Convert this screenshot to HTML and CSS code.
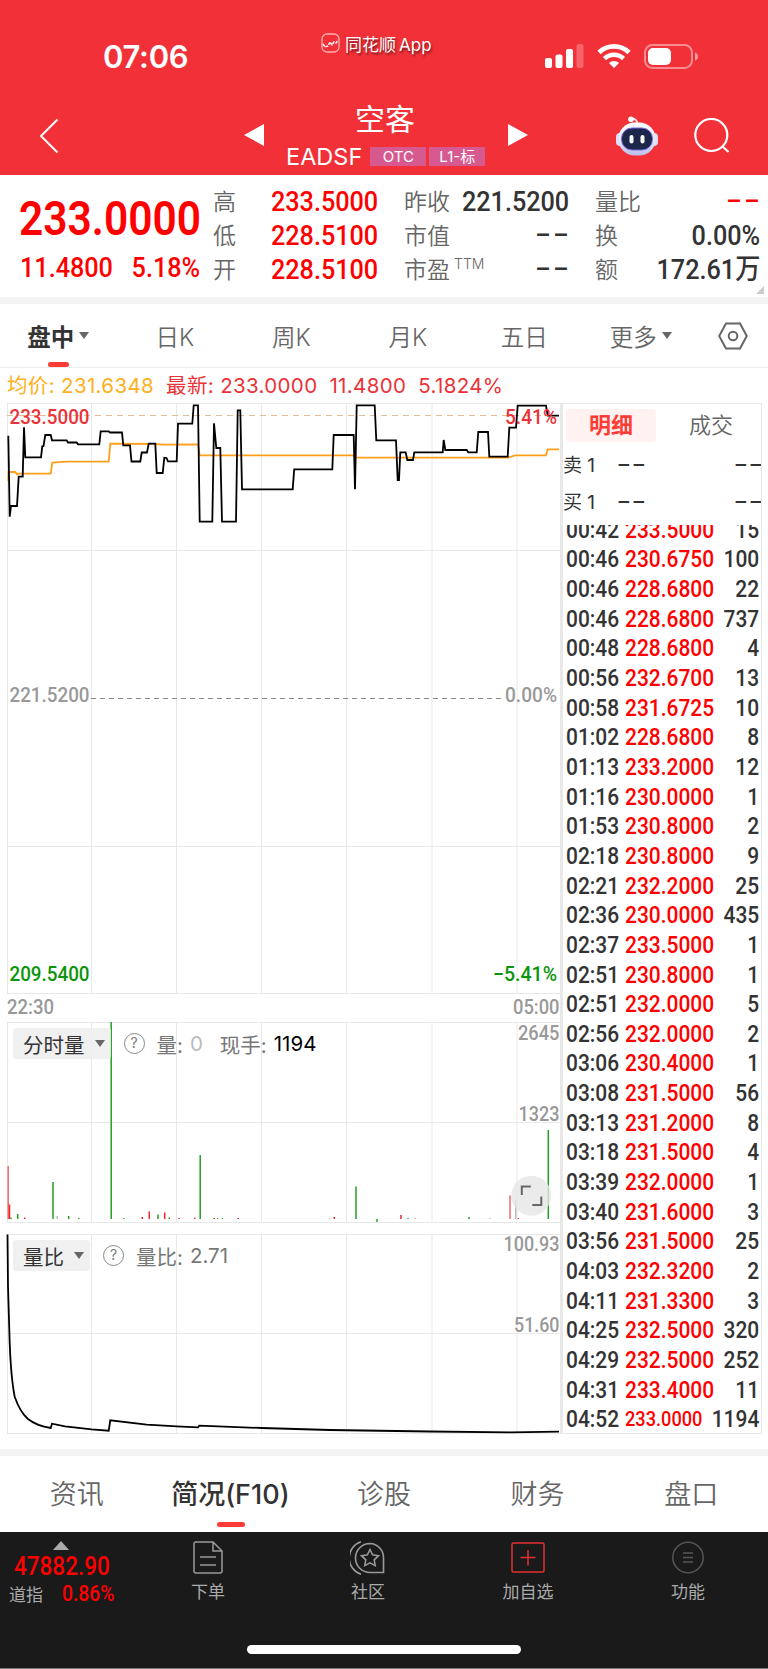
FILE: index.html
```html
<!DOCTYPE html>
<html lang="zh-CN">
<head>
    <meta charset="UTF-8">
    <meta name="viewport" content="width=device-width, initial-scale=1.0">
    <title>空客 EADSF</title>
    <link rel="stylesheet" href="styles.css">
</head>
<body>

    <!-- Header -->
    <header class="header">
        <div class="status-bar">
            <div class="clock">07:06</div>
            <div class="app-mark">
                <svg width="19" height="20" viewBox="0 0 19 20" fill="none" stroke="#fff">
                    <rect x="1" y="1" width="17" height="18" rx="5" stroke="#ffb0b0" stroke-width="1.3"/>
                    <path d="M2 11l2 3 3-1 2-4 2 3 2-3 2 1 2-3" stroke-width="1.5" stroke-dasharray="3 1"/>
                </svg>
                <span>同花顺<b>App</b></span>
            </div>
            <div class="status-icons">
                <svg width="39" height="24" viewBox="0 0 39 24" fill="#fff">
                    <rect x="0" y="14" width="7" height="10" rx="2"/>
                    <rect x="10.5" y="10.5" width="7" height="13.5" rx="2"/>
                    <rect x="21" y="5" width="7" height="19" rx="2"/>
                    <rect x="31.5" y="0" width="7" height="24" rx="2" opacity=".25"/>
                </svg>
                <svg width="34" height="24" viewBox="0 0 34 24" fill="none" stroke="#fff" stroke-width="4.6">
                    <path d="M2 8.5a21.5 21.5 0 0 1 30 0"/>
                    <path d="M7.5 14.6a13.6 13.6 0 0 1 19 0"/>
                    <path d="M17 24l-5-5a7.2 7.2 0 0 1 10 0z" fill="#fff" stroke="none"/>
                </svg>
                <svg width="54" height="25" viewBox="0 0 54 25">
                    <rect x="1" y="1" width="47" height="23" rx="7.5" fill="none" stroke="#fff" stroke-opacity=".45" stroke-width="2"/>
                    <rect x="4" y="4" width="23" height="17" rx="5" fill="#fff"/>
                    <path d="M51 8.500q3 1 3 4t-3 4z" fill="#fff" opacity=".5"/>
                </svg>
            </div>
        </div>
        <div class="nav">
            <svg class="back" width="20" height="36" viewBox="0 0 20 36" fill="none" stroke="#fff" stroke-width="2">
                <path d="M18.500 1.500L2 18l16.500 16.500"/>
            </svg>
            <svg class="prev" width="20" height="22" viewBox="0 0 20 22" fill="#fff"><path d="M20 0v22L0 11z"/></svg>
            <div class="stock">
                <div class="stock-name">空客</div>
                <div class="stock-code">EADSF <span class="badge">OTC</span><span class="badge">L1-标</span></div>
            </div>
            <svg class="next" width="20" height="22" viewBox="0 0 20 22" fill="#fff"><path d="M0 0v22l20-11z"/></svg>
            <svg class="robot" width="42" height="40" viewBox="0 0 42 40">
                <defs>
                    <linearGradient id="shell" x1="0" y1="0" x2="0" y2="1">
                        <stop offset="0" stop-color="#fff"/>
                        <stop offset=".6" stop-color="#e3e5fb"/>
                        <stop offset="1" stop-color="#b9bbe8"/>
                    </linearGradient>
                </defs>
                <path d="M15 3q6-1 6.500 5" fill="none" stroke="#f3d9e6" stroke-width="2"/>
                <circle cx="15" cy="3.300" r="2.800" fill="#fff"/>
                <rect x="0" y="17" width="8" height="13" rx="4" fill="#dcdff8"/>
                <rect x="34" y="17" width="8" height="13" rx="4" fill="#dcdff8"/>
                <rect x="2.500" y="6.500" width="37" height="33" rx="16" fill="url(#shell)"/>
                <rect x="5.500" y="12" width="31" height="22" rx="10.500" fill="#1c2749" stroke="#7668e8" stroke-width="1"/>
                <rect x="13.500" y="19" width="4" height="8.500" rx="2" fill="#fff"/>
                <rect x="24.500" y="19" width="4" height="8.500" rx="2" fill="#fff"/>
            </svg>
            <svg class="search" width="36" height="36" viewBox="0 0 36 36" fill="none" stroke="#fff" stroke-width="2.200">
                <circle cx="17.300" cy="17" r="16"/>
                <path d="M28 28l6.500 6"/>
            </svg>
        </div>
    </header>

    <!-- Quote -->
    <section class="quote">
        <div class="quote-price">
            <div class="price"><span class="num">233.0000</span></div>
            <div class="change"><span class="num">11.4800</span><span class="num right">5.18%</span></div>
        </div>
        <div class="quote-item"><label>高</label><span class="num right red">233.5000</span></div>
        <div class="quote-item"><label>昨收</label><span class="num right">221.5200</span></div>
        <div class="quote-item"><label>量比</label><span class="num right red dash">––</span></div>
        <div class="quote-item"><label>低</label><span class="num right red">228.5100</span></div>
        <div class="quote-item"><label>市值</label><span class="num right dash">––</span></div>
        <div class="quote-item"><label>换</label><span class="num right">0.00%</span></div>
        <div class="quote-item"><label>开</label><span class="num right red">228.5100</span></div>
        <div class="quote-item"><label>市盈<sup>TTM</sup></label><span class="num right dash">––</span></div>
        <div class="quote-item"><label>额</label><span class="num right">172.61万</span></div>
        <i class="corner"></i>
    </section>

    <!-- Period tabs -->
    <nav class="periods">
        <a class="active">盘中<i class="caret"></i></a>
        <a>日K</a>
        <a>周K</a>
        <a>月K</a>
        <a>五日</a>
        <a>更多<i class="caret"></i></a>
        <svg width="30" height="28" viewBox="0 0 30 28" fill="none" stroke="#666" stroke-width="2">
            <path d="M8 1.500h14L28.800 14 22 26.500H8L1.200 14z"/>
            <circle cx="15" cy="14" r="4.300"/>
        </svg>
    </nav>

    <div class="legend">
        <span class="avg">均价: 231.6348</span><span>最新: 233.0000</span><span>11.4800</span><span>5.1824%</span>
    </div>

    <main class="market">
        <div class="charts">
            <!-- Price chart -->
            <svg class="chart" width="562" height="619" viewBox="0 403 562 619">
                <g class="grid">
                    <path d="M7 403.500H560M7 550.500H560M7 846.500H560M7 993.500H560"/>
                    <path d="M7.500 403V994M91.500 403V994M176.500 403V994M261.500 403V994M346.500 403V994M432 403V994M517 403V994"/>
                </g>
                <path d="M7 415.500H558" stroke="#e0bd94" stroke-dasharray="6 5" fill="none"/>
                <path d="M91 698.500H505" stroke="#888" stroke-dasharray="5 4" fill="none"/>
                <polyline class="avg-line" points="8.300,481 8.500,472 15.300,472 17,474.500 18,473.700 50.700,473.700 52.300,462.700 66.700,461.700 108.700,461.700 110.300,443.700 153,444 163,444.700 198,444.300 199.700,455.300 353.700,455.300 355,457.700 508,457.700 515,455.300 546,455.300 547.700,449.300 559,449.300"/>
                <polyline class="price-line" points="8.300,435.700 9.700,516.700 11,506 17,506 18.700,476.700 22.700,476.700 24,427.300 25.300,457.300 41,457.300 42.300,446.300 43.500,446 45.300,435 50.700,435 52,440.300 66.700,440.300 68,442.500 76.700,442.500 78,444.300 99.300,444.300 100.700,431.300 108.700,431.300 110,432.500 122,432.500 123.300,445.300 130,445.300 131.500,461.500 140.300,461.500 141.700,452.500 147,452.500 148.700,443.700 155.300,443.700 156.700,473 162.700,473 164.300,457.700 166.500,458 168,461.300 176.700,461.300 178,423.700 192.300,423.700 193.700,405.300 198,405.300 199.700,521.700 212.300,521.700 214,423.300 216.300,448 220.300,448 222,521.700 236,521.700 237.700,410.300 240.300,410.300 242,489.300 292.700,489.300 294.200,469.300 332.300,469.300 333.700,435 353.700,435 355,489.300 356.700,405.300 374.700,405.300 376.300,440.300 396,440.300 397.700,480 399,480 400.300,452.300 405.700,452.300 407.300,460 413,460 414.300,452.300 442.700,452.300 443.700,440 445.300,450 466.700,450 468.300,452.300 476.700,452.300 478.300,432 488,432 489.300,456.700 507.700,456.700 509.300,427.700 516,427.700 517.700,405.700 546,405.700 547.700,415.700 559,415.700"/>
                <g class="axis">
                    <text x="9.500" y="423.500" textLength="80" lengthAdjust="spacingAndGlyphs" fill="#ea3338">233.5000</text>
                    <text x="505" y="423.500" textLength="52" lengthAdjust="spacingAndGlyphs" fill="#ea3338">5.41%</text>
                    <text x="9.500" y="702" textLength="80" lengthAdjust="spacingAndGlyphs" fill="#999">221.5200</text>
                    <text x="505" y="702" textLength="52" lengthAdjust="spacingAndGlyphs" fill="#999">0.00%</text>
                    <text x="9.500" y="981" textLength="80" lengthAdjust="spacingAndGlyphs" fill="#0a960a">209.5400</text>
                    <text x="493" y="981" textLength="64" lengthAdjust="spacingAndGlyphs" fill="#0a960a">−5.41%</text>
                    <text x="7" y="1014" textLength="47" lengthAdjust="spacingAndGlyphs" fill="#999">22:30</text>
                    <text x="513" y="1014" textLength="46.500" lengthAdjust="spacingAndGlyphs" fill="#999">05:00</text>
                </g>
            </svg>

            <!-- Volume chart -->
            <div class="sub-chart">
                <svg class="chart" width="562" height="212" viewBox="0 1022 562 212">
                    <g class="grid">
                        <path d="M7 1022.500H560M7 1122.500H560M7 1222.500H560"/>
                        <path d="M7.500 1022V1223M91.500 1022V1223M176.500 1022V1223M261.500 1022V1223M346.500 1022V1223M432 1022V1223M517 1022V1223"/>
                    </g>
                    <g fill="none" stroke-width="1.500">
                        <path stroke="#f26b6b" d="M8.200 1219V1166M510 1219V1195.500"/>
                        <path stroke="#e8262c" d="M9.500 1219V1204.500M24.700 1219V1217.500M142.300 1219V1217M149.300 1219V1211.500M164.700 1219V1212.500M179 1219V1218M194.700 1219V1217.800M214.300 1219V1218M238.300 1219V1218M334.300 1219V1217M401 1219V1215M415 1219V1218.500M518.300 1219V1218"/>
                        <path stroke="#22a022" d="M11 1219V1217.500M17.700 1219V1214M53 1219V1182M68.700 1219V1216M78.700 1219V1218M111.200 1219V1022M123.700 1219V1218M158 1219V1214.500M169.300 1219V1217.500M200.200 1219V1155M217.500 1219V1218.300M222.500 1219V1218.300M356 1219V1186.500M377 1222V1219M408 1219V1218M469 1219V1217M548.300 1219V1130"/>
                        <path stroke="#bbb" d="M57.300 1219V1216M330 1219V1218M490 1219V1218M515.700 1219V1200"/>
                    </g>
                    <g class="axis">
                        <text x="518" y="1039.500" textLength="41.500" lengthAdjust="spacingAndGlyphs" fill="#999">2645</text>
                        <text x="518.500" y="1121" textLength="41" lengthAdjust="spacingAndGlyphs" fill="#999">1323</text>
                    </g>
                    <circle cx="531.300" cy="1195.700" r="20" fill="#e6e6e6" opacity=".8"/>
                    <path d="M521.800 1195V1186.500H530.800M541.300 1196.500V1205H532.300" fill="none" stroke="#666" stroke-width="2"/>
                </svg>
                <div class="indicator">
                    <span class="picker">分时量<i class="caret"></i></span>
                    <span class="help">?</span>
                    <span>量:</span><span class="faint">0</span><span class="lots">现手:</span><span class="black">1194</span>
                </div>
            </div>

            <!-- Volume ratio chart -->
            <div class="sub-chart">
                <svg class="chart" width="562" height="200" viewBox="0 1234 562 200">
                    <g class="grid">
                        <path d="M7 1234.500H560M7 1333.500H560M7 1433.500H560"/>
                        <path d="M7.500 1234V1433M91.500 1234V1433M176.500 1234V1433M261.500 1234V1433M346.500 1234V1433M432 1234V1433M517 1234V1433"/>
                    </g>
                    <path class="price-line" d="M7.500 1234.500L8 1286.700 9.700 1343Q11 1378 14.700 1396.700Q20 1412 28 1419Q37 1426 50.700 1428L52 1423.700 65 1426.300 91.700 1429.300 108.700 1430.700 110.300 1420.300 146.700 1424.700 176.700 1426.300 198 1427.300 199.300 1425.700 261.700 1428 330 1430 430 1431.500 510 1432.300 559 1431.700"/>
                    <g class="axis">
                        <text x="503.500" y="1251" textLength="56" lengthAdjust="spacingAndGlyphs" fill="#999">100.93</text>
                        <text x="514" y="1332" textLength="45.500" lengthAdjust="spacingAndGlyphs" fill="#999">51.60</text>
                    </g>
                </svg>
                <div class="indicator">
                    <span class="picker">量比<i class="caret"></i></span>
                    <span class="help">?</span>
                    <span>量比:</span><span>2.71</span>
                </div>
            </div>
        </div>

        <!-- Order book and trades -->
        <aside class="trades">
            <div class="trade-tabs">
                <span class="active">明细</span>
                <span>成交</span>
            </div>
            <div class="book"><span>卖 1</span><span class="dash">––</span><span class="dash">––</span></div>
            <div class="book"><span>买 1</span><span class="dash">––</span><span class="dash">––</span></div>
            <div class="ticks">
                <div class="tick"><span>00:42</span><b>233.5000</b><em>15</em></div>
                <div class="tick"><span>00:46</span><b>230.6750</b><em>100</em></div>
                <div class="tick"><span>00:46</span><b>228.6800</b><em>22</em></div>
                <div class="tick"><span>00:46</span><b>228.6800</b><em>737</em></div>
                <div class="tick"><span>00:48</span><b>228.6800</b><em>4</em></div>
                <div class="tick"><span>00:56</span><b>232.6700</b><em>13</em></div>
                <div class="tick"><span>00:58</span><b>231.6725</b><em>10</em></div>
                <div class="tick"><span>01:02</span><b>228.6800</b><em>8</em></div>
                <div class="tick"><span>01:13</span><b>233.2000</b><em>12</em></div>
                <div class="tick"><span>01:16</span><b>230.0000</b><em>1</em></div>
                <div class="tick"><span>01:53</span><b>230.8000</b><em>2</em></div>
                <div class="tick"><span>02:18</span><b>230.8000</b><em>9</em></div>
                <div class="tick"><span>02:21</span><b>232.2000</b><em>25</em></div>
                <div class="tick"><span>02:36</span><b>230.0000</b><em>435</em></div>
                <div class="tick"><span>02:37</span><b>233.5000</b><em>1</em></div>
                <div class="tick"><span>02:51</span><b>230.8000</b><em>1</em></div>
                <div class="tick"><span>02:51</span><b>232.0000</b><em>5</em></div>
                <div class="tick"><span>02:56</span><b>232.0000</b><em>2</em></div>
                <div class="tick"><span>03:06</span><b>230.4000</b><em>1</em></div>
                <div class="tick"><span>03:08</span><b>231.5000</b><em>56</em></div>
                <div class="tick"><span>03:13</span><b>231.2000</b><em>8</em></div>
                <div class="tick"><span>03:18</span><b>231.5000</b><em>4</em></div>
                <div class="tick"><span>03:39</span><b>232.0000</b><em>1</em></div>
                <div class="tick"><span>03:40</span><b>231.6000</b><em>3</em></div>
                <div class="tick"><span>03:56</span><b>231.5000</b><em>25</em></div>
                <div class="tick"><span>04:03</span><b>232.3200</b><em>2</em></div>
                <div class="tick"><span>04:11</span><b>231.3300</b><em>3</em></div>
                <div class="tick"><span>04:25</span><b>232.5000</b><em>320</em></div>
                <div class="tick"><span>04:29</span><b>232.5000</b><em>252</em></div>
                <div class="tick"><span>04:31</span><b>233.4000</b><em>11</em></div>
                <div class="tick"><span>04:52</span><b class="small">233.0000</b><em>1194</em></div>
            </div>
        </aside>
    </main>

    <nav class="sections">
        <a>资讯</a>
        <a class="active">简况(F10)</a>
        <a>诊股</a>
        <a>财务</a>
        <a>盘口</a>
    </nav>

    <!-- Bottom bar -->
    <footer class="bottom">
        <div class="tools">
            <div class="index">
                <i class="up"></i>
                <div class="index-value"><span class="num">47882.90</span></div>
                <div class="index-row"><span>道指</span><span class="num">0.86%</span></div>
            </div>
            <div class="tool">
                <svg width="34" height="34" viewBox="0 0 34 34" fill="none" stroke="#999" stroke-width="1.500">
                    <path d="M4 1h18l9 9v20q0 2-2 2H5q-2 0-2-2V3q0-2 2-2zM22 1v9h9M9 16h16M9 24h16"/>
                </svg>
                下单
            </div>
            <div class="tool">
                <svg width="36" height="34" viewBox="0 0 36 34" fill="none" stroke="#999" stroke-width="1.600">
                    <path d="M20 2.500a14 14 0 0 0 0 29h13.500V17A14 14 0 0 0 20 2.500z"/>
                    <path d="M11 .8a17 17 0 0 0 0 32.400"/>
                    <path d="M20 8.500l2.600 5.300 5.900.9-4.300 4.100 1 5.800-5.200-2.700-5.200 2.700 1-5.800-4.300-4.100 5.900-.9z"/>
                </svg>
                社区
            </div>
            <div class="tool">
                <svg width="34" height="34" viewBox="0 0 34 34" fill="none" stroke="#e23033" stroke-width="1.500">
                    <rect x="1" y="2" width="32" height="29" rx="1.500"/>
                    <path d="M9.500 16.500h15M17 9v15.500"/>
                </svg>
                加自选
            </div>
            <div class="tool">
                <svg width="34" height="34" viewBox="0 0 34 34" fill="none" stroke="#555" stroke-width="1.500">
                    <circle cx="17" cy="16.500" r="15.200"/>
                    <path d="M12 12h10M12 16.500h10M12 21h10"/>
                </svg>
                功能
            </div>
        </div>
        <div class="home-bar"></div>
    </footer>

</body>
</html>
```

FILE: styles.css
```css
* {
    box-sizing: border-box;
}

body {
    margin: 0;
    width: 768px;
    background: #fff;
    color: #333;
    font-family: Inter, "Noto Sans CJK SC", sans-serif;
}

svg {
    display: block;
    flex: none;
}

i, em {
    font-style: normal;
}

/* narrow digits */
.num {
    display: inline-block;
    font-family: Roboto, "Noto Sans CJK SC", sans-serif;
    font-weight: 500;
    transform: scaleX(.9);
    transform-origin: left center;
}

.num.right {
    transform-origin: right center;
}

.red {
    color: #f00;
}

.caret {
    display: inline-block;
    border: 5.5px solid transparent;
    border-top: 7px solid #666;
    border-bottom: 0;
}

/* header */
.header {
    height: 175px;
    background: #f23038;
    color: #fff;
}

.status-bar {
    display: flex;
    height: 90px;
    padding-left: 103px;
}

.clock {
    width: 218px;
    margin-top: 38px;
    font-size: 31px;
    font-weight: 600;
    letter-spacing: -.3px;
    line-height: 38px;
}

.app-mark {
    display: flex;
    align-items: center;
    gap: 5px;
    width: 224px;
    height: 26px;
    margin-top: 30px;
    font-size: 17px;
    text-shadow: 1px 2px 2px rgba(0, 0, 0, .5);
}

.app-mark b {
    margin-left: 3px;
    font-weight: 400;
}

.status-icons {
    display: flex;
    align-items: flex-start;
    gap: 13px;
    margin-top: 44px;
}

.nav {
    display: flex;
    align-items: center;
    height: 85px;
    padding: 15px 0 8px 39px;
}

.prev {
    margin: -2px 0 0 185px;
}

.stock {
    width: 200px;
    height: 68px;
    margin: 4px 22px 0;
}

.stock-name {
    margin-top: -4px;
    padding-right: 2px;
    font-size: 30px;
    line-height: 38px;
    text-align: center;
}

.stock-code {
    display: flex;
    align-items: center;
    gap: 3px;
    height: 36px;
    font-size: 23.500px;
    white-space: nowrap;
}

.badge {
    width: 56px;
    height: 19px;
    background: #d65a90;
    font-size: 15px;
    line-height: 19px;
    text-align: center;
}

.badge:first-child {
    margin-left: 5px;
}

.next {
    margin-top: -2px;
}

.robot {
    margin-left: 88px;
}

.search {
    margin-left: 36px;
}

/* quote */
.quote {
    position: relative;
    display: grid;
    grid-template-columns: 167px 165px 165px 165px;
    grid-template-rows: 34px 34px 34px;
    column-gap: 26px;
    height: 129px;
    padding: 10px 0 0 20px;
    border-bottom: 7px solid #f4f4f4;
}

.quote-price {
    grid-row: 1 / 4;
    width: 180px;
    color: #f00;
}

.price {
    height: 66px;
    margin-left: -1px;
    font-size: 48px;
    line-height: 66px;
    white-space: nowrap;
}

.price .num {
    font-weight: 600;
    transform: scaleX(.885);
}

.change {
    display: flex;
    justify-content: space-between;
    font-size: 28px;
    line-height: 34px;
}

.quote-item {
    display: flex;
    justify-content: space-between;
    font-size: 28px;
    line-height: 34px;
    white-space: nowrap;
}

.quote-item label {
    flex: none;
    width: 80px;
    margin-right: -40px;
    color: #666;
    font-size: 23px;
    font-weight: 350;
}

.quote-item sup {
    margin-left: 4px;
    font-size: 14px;
    line-height: 0;
}

.dash {
    letter-spacing: 3px;
}

.quote-item .dash {
    margin-right: -2px;
    transform: scaleX(.85);
}

.corner {
    position: absolute;
    right: 4px;
    bottom: 3px;
    border: 4px solid #ccc;
    border-top-color: transparent;
    border-left-color: transparent;
}

/* period tabs */
.periods {
    display: flex;
    align-items: center;
    height: 64px;
    border-bottom: 1px solid #ececec;
    color: #666;
    font-size: 23.500px;
    font-weight: 350;
}

.periods a {
    position: relative;
    display: flex;
    align-items: center;
    justify-content: center;
    gap: 5px;
    width: 116.500px;
    height: 63px;
}

.periods .active {
    color: #333;
    font-weight: 700;
}

.periods svg {
    margin-left: 19px;
}

.periods .active::after,
.sections .active::after {
    content: "";
    position: absolute;
    bottom: 0;
    left: 48px;
    width: 21px;
    height: 5px;
    border-radius: 3px;
    background: #ff3b36;
}

.legend {
    display: flex;
    gap: 12px;
    height: 35px;
    padding-left: 7px;
    color: #ea3338;
    font-size: 20.500px;
    letter-spacing: .35px;
    line-height: 36px;
    white-space: nowrap;
}

.legend .avg {
    color: #fdb021;
}

/* charts */
.market {
    display: flex;
    height: 1046px;
}

.charts {
    width: 562px;
}

.grid {
    fill: none;
    stroke: #e8e8e8;
}

.price-line {
    fill: none;
    stroke: #000;
    stroke-width: 1.8;
}

.avg-line {
    fill: none;
    stroke: #ff9f1a;
    stroke-width: 1.8;
}

.axis {
    font-family: Roboto, sans-serif;
    font-size: 20.5px;
    font-weight: 500;
}

.sub-chart {
    position: relative;
}

.indicator {
    position: absolute;
    top: 6px;
    left: 13px;
    display: flex;
    align-items: center;
    gap: 7px;
    height: 31px;
    color: #777;
    font-size: 20.500px;
    white-space: nowrap;
}

.picker {
    display: flex;
    align-items: center;
    gap: 10px;
    height: 31px;
    padding: 0 6px 0 10px;
    border-radius: 3px;
    background: rgba(236, 236, 236, .8);
    color: #333;
}

.help {
    width: 21px;
    height: 21px;
    margin: 0 5px 0 6px;
    border: 1.500px solid #888;
    border-radius: 50%;
    font-size: 14px;
    line-height: 18px;
    text-align: center;
}

.faint {
    color: #bbb;
}

.lots {
    margin-left: 10px;
}

.black {
    color: #000;
}

/* trades */
.trades {
    width: 202px;
    height: 1031px;
    margin-left: -2px;
    border: 1px solid #e8e8e8;
    border-left-width: 3px;
    overflow: hidden;
}

.trade-tabs {
    display: flex;
    gap: 10px;
    padding: 5px 3px;
    color: #666;
    font-size: 22px;
    font-weight: 350;
    line-height: 33px;
    text-align: center;
}

.trade-tabs span {
    width: 90px;
    height: 33px;
    border-radius: 4px;
}

.trade-tabs .active {
    background: #fff2f1;
    color: #ff3b36;
    font-weight: 700;
}

.book {
    display: grid;
    grid-template-columns: 54px 1fr auto;
    height: 37px;
    font-size: 19px;
    line-height: 37px;
    white-space: nowrap;
}

.book .dash {
    margin-right: -3px;
    font-family: Roboto, sans-serif;
    font-size: 21px;
    font-weight: 500;
    letter-spacing: 1.500px;
}

.ticks {
    display: flex;
    flex-direction: column;
    justify-content: flex-end;
    height: 910px;
    margin-top: 4px;
    overflow: hidden;
}

.tick {
    display: grid;
    flex: none;
    grid-template-columns: 59px 90px 44px;
    height: 29.670px;
    padding-left: 3px;
    font-family: Roboto, sans-serif;
    font-size: 23px;
    font-weight: 500;
    line-height: 29.670px;
}

.tick span,
.tick b,
.tick em {
    transform: scaleX(.91);
    transform-origin: left center;
}

.tick b {
    color: #f00;
    font-weight: 500;
}

.tick .small {
    font-size: 20px;
}

.tick em {
    justify-self: end;
    transform-origin: right center;
}

/* bottom */
.sections {
    display: flex;
    height: 83px;
    border-top: 7px solid #f4f4f4;
    color: #666;
    font-size: 27px;
    font-weight: 350;
    line-height: 78px;
    text-align: center;
}

.sections a {
    position: relative;
    flex: 1;
}

.sections .active {
    color: #333;
    font-weight: 500;
}

.sections .active::after {
    bottom: 5px;
    left: 63px;
    width: 28px;
}

.bottom {
    height: 137px;
    border-bottom: 1px solid #777;
    background: #1a1a1a;
    color: #aaa;
    font-size: 17px;
    overflow: hidden;
}

.tools {
    display: flex;
    height: 113px;
}

.index {
    width: 128px;
    padding-top: 9px;
}

.up {
    display: block;
    width: 0;
    margin-left: 53px;
    border: 8px solid transparent;
    border-top: 0;
    border-bottom: 9px solid #aaa;
}

.index-value {
    padding-left: 14px;
    color: #f00;
    font-size: 25px;
    line-height: 33px;
}

.index-row {
    display: flex;
    align-items: center;
    gap: 19px;
    height: 20px;
    padding-left: 9px;
}

.index-row .num {
    color: #f00;
    font-size: 21.500px;
}

.tool {
    display: flex;
    flex-direction: column;
    align-items: center;
    gap: 4px;
    width: 160px;
    padding-top: 9px;
    line-height: 26px;
}

.home-bar {
    width: 274px;
    height: 9px;
    margin: 0 auto;
    border-radius: 5px;
    background: #fff;
}
```
